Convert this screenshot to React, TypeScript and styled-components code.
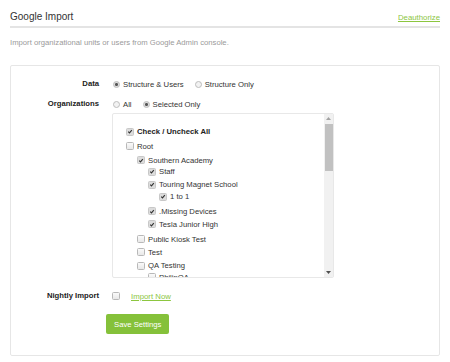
import styled, { createGlobalStyle } from 'styled-components';

type TOrg = {
  name: string;
  checked: boolean;
  children?: TOrg[];
};

const orgs: TOrg[] = [
  {
    name: 'Root',
    checked: false,
    children: [
      {
        name: 'Southern Academy',
        checked: true,
        children: [
          { name: 'Staff', checked: true },
          { name: 'Touring Magnet School', checked: true, children: [{ name: '1 to 1', checked: true }] },
          { name: '.Missing Devices', checked: true },
          { name: 'Tesla Junior High', checked: true },
        ],
      },
      { name: 'Public Kiosk Test', checked: false },
      { name: 'Test', checked: false },
      { name: 'QA Testing', checked: false, children: [{ name: 'PhilipQA', checked: false }] },
    ],
  },
];

const GlobalStyle = createGlobalStyle`
  body {
    margin: 0;
    background: #fff;
    font-family: 'Liberation Sans', Arial, sans-serif;
    color: #333;
  }
`;

const Check = ({ checked }: { checked: boolean }) => (
  <CheckBox $checked={checked}>
    {checked && (
      <svg width='7' height='7' viewBox='0 0 7 7'>
        <path d='M1.4 3.6 L2.9 5.1 L5.6 1.8' fill='none' stroke='#333' strokeWidth='1.3' />
      </svg>
    )}
  </CheckBox>
);

// nested org tree, one level of indent per list
const OrgList = ({ items, top = 0 }: { items: TOrg[]; top?: number }) => (
  <List $top={top}>
    {items.map((org) => (
      <li key={org.name}>
        <Item>
          <Check checked={org.checked} />
          {org.name}
        </Item>
        {org.children && <OrgList items={org.children} top={org.name === 'Root' ? 2 : 0} />}
      </li>
    ))}
  </List>
);

const App = () => {
  return (
    <>
      <GlobalStyle />
      <Page>
        <Header>
          <Title>Google Import</Title>
          <GreenLink href='#'>Deauthorize</GreenLink>
        </Header>
        <Description>Import organizational units or users from Google Admin console.</Description>

        <Panel>
          <Field>
            <Label>Data</Label>
            <Radios>
              <RadioOption>
                <Radio $on />
                Structure &amp; Users
              </RadioOption>
              <RadioOption>
                <Radio />
                Structure Only
              </RadioOption>
            </Radios>
          </Field>

          <Field>
            <Label>Organizations</Label>
            <div>
              <Radios>
                <RadioOption>
                  <Radio />
                  All
                </RadioOption>
                <RadioOption>
                  <Radio $on />
                  Selected Only
                </RadioOption>
              </Radios>
              <TreeBox>
                <TreeScroll>
                  <Item $bold $gap={2.8}>
                    <Check checked />
                    Check / Uncheck All
                  </Item>
                  <OrgList items={orgs} />
                </TreeScroll>
                <ScrollBar>
                  <Arrow>
                    <svg width='5' height='3' viewBox='0 0 5 3'>
                      <path d='M0 3 L2.5 0 L5 3 Z' fill='#a3a3a3' />
                    </svg>
                  </Arrow>
                  <Track>
                    <Thumb />
                  </Track>
                  <Arrow>
                    <svg width='5' height='3' viewBox='0 0 5 3'>
                      <path d='M0 0 L5 0 L2.5 3 Z' fill='#505050' />
                    </svg>
                  </Arrow>
                </ScrollBar>
              </TreeBox>
            </div>
          </Field>

          <Field $mt={12}>
            <Label>Nightly Import</Label>
            <Inline>
              <Check checked={false} />
              <GreenLink href='#'>Import Now</GreenLink>
            </Inline>
          </Field>

          <ButtonRow>
            <SaveButton>Save Settings</SaveButton>
          </ButtonRow>
        </Panel>
      </Page>
    </>
  );
};

export default App;

const Page = styled.div`
  padding: 0 10px;
  width: 430px;
`;

const Header = styled.div`
  display: flex;
  justify-content: space-between;
  align-items: baseline;
  padding-top: 10px;
  padding-bottom: 2px;
  border-bottom: 2px solid #e4e4e4;
`;

const Title = styled.h1`
  margin: 0;
  font-size: 10px;
  line-height: 14px;
  font-weight: normal;
  color: #333;
`;

const GreenLink = styled.a`
  font-size: 7.8px;
  color: #8cc63f;
  text-decoration: underline;
`;

const Description = styled.p`
  margin: 8.5px 0 16.5px;
  font-size: 7.7px;
  line-height: 12px;
  color: #9a9a9a;
`;

const Panel = styled.div`
  border: 1px solid #e6e6e6;
  border-radius: 2px;
  padding: 12px 0 21px;
  font-size: 7.7px;
`;

const Field = styled.div<{ $mt?: number }>`
  display: grid;
  grid-template-columns: 88px 1fr;
  column-gap: 13px;
  align-items: start;
  margin-top: ${(p) => p.$mt ?? 0}px;
  margin-bottom: 8px;
`;

const Label = styled.div`
  text-align: right;
  font-weight: bold;
  line-height: 12px;
  color: #222;
`;

const Radios = styled.div`
  display: flex;
  gap: 10px;
  height: 12px;
  align-items: center;
`;

const RadioOption = styled.label`
  display: flex;
  align-items: center;
  gap: 3px;
  color: #333;
`;

const Radio = styled.span<{ $on?: boolean }>`
  width: 5px;
  height: 5px;
  border-radius: 50%;
  border: 0.8px solid #bdbdbd;
  background: ${(p) => (p.$on ? 'radial-gradient(circle, #555 0 1.3px, #ddd 1.6px)' : '#f2f2f2')};
  margin-left: 1px;
`;

const TreeBox = styled.div`
  display: flex;
  margin-top: 3px;
  width: 222px;
  height: 165px;
  box-sizing: border-box;
  border: 1px solid #e8e8e8;
  border-radius: 2px;
  overflow: hidden;
`;

const TreeScroll = styled.div`
  flex: 1;
  padding: 12px 0 0 13px;
  overflow: hidden;
`;

const List = styled.ul<{ $top: number }>`
  list-style: none;
  margin: ${(p) => p.$top}px 0 0;
  padding: 0;

  & & {
    padding-left: 11px;
  }

  li {
    padding-bottom: 1.5px;
  }
`;

const Item = styled.div<{ $bold?: boolean; $gap?: number }>`
  display: flex;
  align-items: center;
  gap: 3px;
  height: 11.7px;
  font-weight: ${(p) => (p.$bold ? 'bold' : 'normal')};
  color: ${(p) => (p.$bold ? '#222' : '#333')};
  margin-bottom: ${(p) => p.$gap ?? 0}px;
  white-space: nowrap;
`;

const CheckBox = styled.span<{ $checked: boolean }>`
  display: flex;
  align-items: center;
  justify-content: center;
  width: 6px;
  height: 6px;
  flex: none;
  border: 0.8px solid ${(p) => (p.$checked ? '#c8c8c8' : '#b8b8b8')};
  border-radius: 1.5px;
  background: ${(p) => (p.$checked ? '#dcdcdc' : 'linear-gradient(#fafafa, #e8e8e8)')};
`;

const ScrollBar = styled.div`
  display: flex;
  flex-direction: column;
  width: 9px;
  background: #f1f1f1;
`;

const Arrow = styled.div`
  height: 9px;
  display: flex;
  align-items: center;
  justify-content: center;
`;

const Track = styled.div`
  flex: 1;
  padding: 1px 0 0;
`;

const Thumb = styled.div`
  height: 47px;
  margin: 0 0.5px;
  background: #c1c1c1;
`;

const Inline = styled.div`
  display: flex;
  align-items: center;
  gap: 11px;
  height: 12px;
`;

const ButtonRow = styled.div`
  padding-left: 95px;
  margin-top: 12px;
`;

const SaveButton = styled.button`
  height: 20px;
  padding: 0 8px;
  border: none;
  border-radius: 2px;
  background: #85c13a;
  color: #fff;
  font-family: 'Liberation Sans', Arial, sans-serif;
  font-size: 7.7px;
  cursor: pointer;
`;
